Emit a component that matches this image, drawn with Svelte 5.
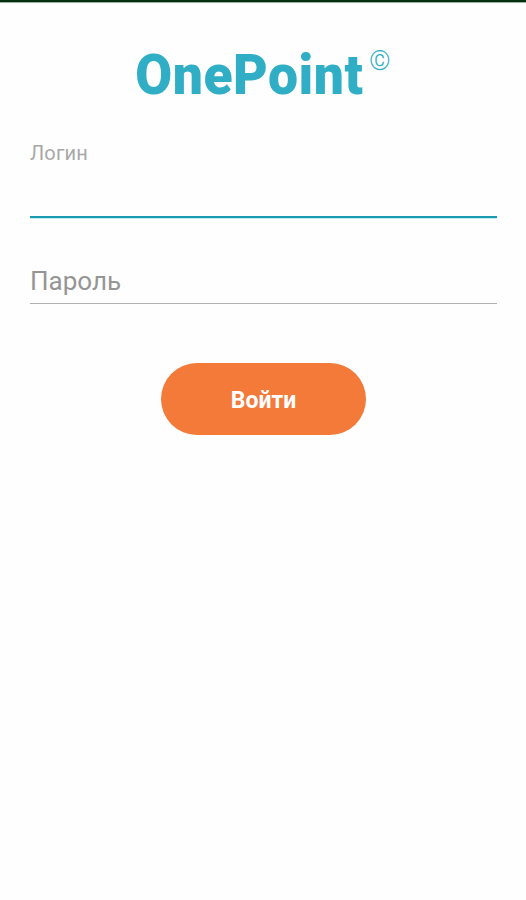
<script lang="ts">
    let login = $state('');
    let password = $state('');
</script>

<main class="screen">
    <div class="status-bar" aria-hidden="true"></div>

    <h1 class="logo"><span class="wordmark">OnePoint</span><sup>©</sup></h1>

    <form class="form" onsubmit={(e) => e.preventDefault()}>
        <label class="field active">
            <span class="label">Логин</span>
            <input type="text" bind:value={login} />
        </label>

        <label class="field">
            <input type="password" placeholder="Пароль" bind:value={password} />
        </label>

        <button class="submit" type="submit">Войти</button>
    </form>
</main>

<style>
    :global(body) {
        background: #fefefe;
    }

    .screen {
        box-sizing: border-box;
        height: 900px;
        font-family: Roboto, 'Noto Sans', sans-serif;
        overflow: hidden;
    }

    .status-bar {
        height: 2px;
        background: #043010;
        border-bottom: 1px solid #9cb0a2;
    }

    .logo {
        display: flex;
        justify-content: center;
        align-items: flex-start;
        gap: 5px;
        margin: 40px 0 0;
        height: 65px;
        color: #30aec5;
        font-size: 56px;
        line-height: 64px;
        font-weight: 900;
    }

    /* condensed slightly, the logo is narrower than plain Roboto */
    .wordmark {
        margin: 0 -5px;
        letter-spacing: 0.5px;
        transform: scaleX(0.955);
    }

    .logo sup {
        font-size: 27px;
        line-height: 36px;
        font-weight: 300;
    }

    .form {
        display: flex;
        flex-direction: column;
        padding: 32px 29px 0 30px;
    }

    .field {
        display: flex;
        flex-direction: column;
        justify-content: flex-end;
        box-sizing: border-box;
        border-bottom: 1px solid #b0b0b0;
        height: 86px;
    }

    .field.active {
        height: 78px;
        justify-content: space-between;
        border-bottom: 2px solid #1a9cb0;
        box-shadow: 0 1px 0 -0.5px #8fd3de;
    }

    .label {
        color: #a8a8a8;
        font-size: 20px;
        line-height: 27px;
        letter-spacing: 0.2px;
    }

    input {
        width: 100%;
        height: 44px;
        padding: 0;
        border: 0;
        outline: 0;
        background: transparent;
        color: #333;
        font: 400 26px Roboto, 'Noto Sans', sans-serif;
    }

    input::placeholder {
        color: #959595;
        opacity: 1;
    }

    .submit {
        align-self: center;
        width: 205px;
        height: 72px;
        margin-top: 59px;
        padding: 2px 0 0;
        border: 0;
        border-radius: 36px;
        background: #f37a39;
        color: #fff;
        font: 700 23px Roboto, 'Noto Sans', sans-serif;
    }
</style>
